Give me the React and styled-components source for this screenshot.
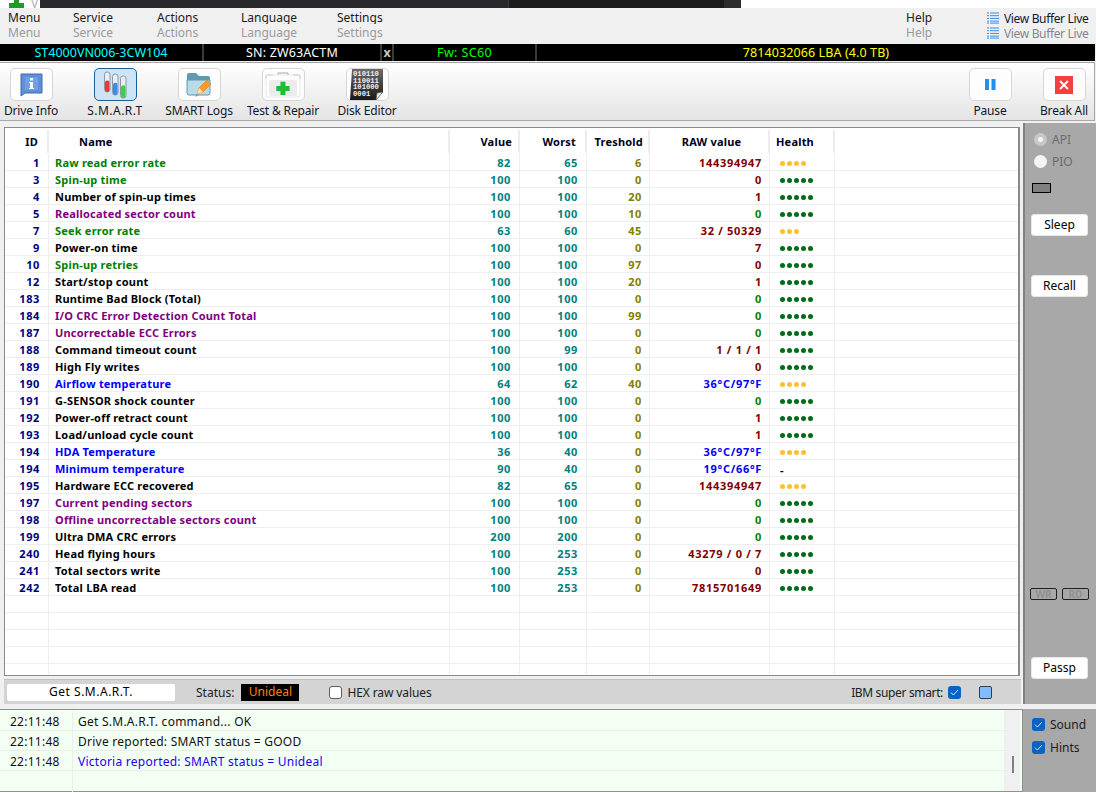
import React from 'react';
import styled, { createGlobalStyle } from 'styled-components';

const GlobalStyle = createGlobalStyle`
  html, body {
    margin: 0;
    padding: 0;
    width: 1096px;
    height: 792px;
    overflow: hidden;
    background: #f0f0f0;
  }
  * { box-sizing: border-box; }
`;

const FONT = `"Noto Sans", "Liberation Sans", sans-serif`;

const GREEN = '#008000';
const PURPLE = '#800080';
const BLUE = '#0000ff';
const BLACK = '#000000';
const MAROON = '#800000';

// id, name, name colour, value, worst, treshold, raw, raw colour, health dots colour, dots
const ROWS = [
  [1, 'Raw read error rate', GREEN, 82, 65, 6, '144394947', MAROON, 'warn', 4],
  [3, 'Spin-up time', GREEN, 100, 100, 0, '0', MAROON, 'good', 5],
  [4, 'Number of spin-up times', BLACK, 100, 100, 20, '1', MAROON, 'good', 5],
  [5, 'Reallocated sector count', PURPLE, 100, 100, 10, '0', GREEN, 'good', 5],
  [7, 'Seek error rate', GREEN, 63, 60, 45, '32 / 50329', MAROON, 'warn', 3],
  [9, 'Power-on time', BLACK, 100, 100, 0, '7', MAROON, 'good', 5],
  [10, 'Spin-up retries', GREEN, 100, 100, 97, '0', MAROON, 'good', 5],
  [12, 'Start/stop count', BLACK, 100, 100, 20, '1', MAROON, 'good', 5],
  [183, 'Runtime Bad Block (Total)', BLACK, 100, 100, 0, '0', GREEN, 'good', 5],
  [184, 'I/O CRC Error Detection Count Total', PURPLE, 100, 100, 99, '0', GREEN, 'good', 5],
  [187, 'Uncorrectable ECC Errors', PURPLE, 100, 100, 0, '0', GREEN, 'good', 5],
  [188, 'Command timeout count', BLACK, 100, 99, 0, '1 / 1 / 1', MAROON, 'good', 5],
  [189, 'High Fly writes', BLACK, 100, 100, 0, '0', MAROON, 'good', 5],
  [190, 'Airflow temperature', BLUE, 64, 62, 40, '36°C/97°F', BLUE, 'warn', 4],
  [191, 'G-SENSOR shock counter', BLACK, 100, 100, 0, '0', GREEN, 'good', 5],
  [192, 'Power-off retract count', BLACK, 100, 100, 0, '1', MAROON, 'good', 5],
  [193, 'Load/unload cycle count', BLACK, 100, 100, 0, '1', MAROON, 'good', 5],
  [194, 'HDA Temperature', BLUE, 36, 40, 0, '36°C/97°F', BLUE, 'warn', 4],
  [194, 'Minimum temperature', BLUE, 90, 40, 0, '19°C/66°F', BLUE, 'none', 0],
  [195, 'Hardware ECC recovered', BLACK, 82, 65, 0, '144394947', MAROON, 'warn', 4],
  [197, 'Current pending sectors', PURPLE, 100, 100, 0, '0', GREEN, 'good', 5],
  [198, 'Offline uncorrectable sectors count', PURPLE, 100, 100, 0, '0', GREEN, 'good', 5],
  [199, 'Ultra DMA CRC errors', BLACK, 200, 200, 0, '0', GREEN, 'good', 5],
  [240, 'Head flying hours', BLACK, 100, 253, 0, '43279 / 0 / 7', MAROON, 'good', 5],
  [241, 'Total sectors write', BLACK, 100, 253, 0, '0', MAROON, 'good', 5],
  [242, 'Total LBA read', BLACK, 100, 253, 0, '7815701649', MAROON, 'good', 5],
];

const Page = styled.div`
  width: 1096px;
  height: 792px;
  display: flex;
  flex-direction: column;
  overflow: hidden;
  background: #f0f0f0;
  font-family: ${FONT};
  font-size: 12px;
  color: #000;
`;

/* strip of the window behind, cut off at the top */
const BehindStrip = styled.div`
  height: 8px;
  display: flex;
  background: #fff;
  overflow: hidden;
`;
const BehindIcon = styled.div`
  width: 40px;
  display: flex;
  gap: 7px;
  padding-left: 9px;
`;
const BehindLetter = styled.span`
  font-size: 12px;
  line-height: 8px;
  color: #b0b0b0;
`;
const BehindPane = styled.div`
  width: ${(p) => p.$w}px;
  background: ${(p) => p.$bg};
  border-right: ${(p) => (p.$edge ? '1px solid #3c3c3c' : 'none')};
`;

const MenuBar = styled.div`
  height: 36px;
  display: flex;
  padding: 2px 0 0 8px;
`;
const MenuItem = styled.div`
  width: ${(p) => p.$w}px;
  margin-left: ${(p) => p.$ml || 0}px;
  display: flex;
  flex-direction: column;
`;
const MenuLabel = styled.span`
  height: 14px;
  margin-bottom: 1px;
  line-height: 15px;
  overflow: ${(p) => (p.$clip ? 'hidden' : 'visible')};
  white-space: nowrap;
  color: ${(p) => (p.$ghost ? '#9a9a9a' : '#1a1a1a')};
`;
const BufferLines = styled.div`
  width: 104px;
  padding-top: 1px;
  display: flex;
  flex-direction: column;
`;
const BufferLine = styled.div`
  height: 14px;
  margin-bottom: 1px;
  display: flex;
  align-items: center;
  gap: 5px;
  white-space: nowrap;
  letter-spacing: -0.35px;
  color: ${(p) => (p.$ghost ? '#808890' : '#101830')};
  svg { flex: none; }
`;

const DriveBar = styled.div`
  height: 17px;
  width: 1095px;
  display: grid;
  grid-template-columns: 202px 176px 10px 141px 1fr;
  column-gap: 2px;
  background: #3a3a3a;
  font-size: 12.5px;
  line-height: 17px;
`;
const DriveCell = styled.div`
  background: #000;
  text-align: center;
  color: ${(p) => p.$color};
  font-weight: ${(p) => (p.$bold ? 700 : 400)};
  letter-spacing: ${(p) => p.$track || 0}px;
  white-space: nowrap;
`;

const Toolbar = styled.div`
  height: 59px;
  width: 1095px;
  margin-top: 1px;
  display: flex;
  justify-content: space-between;
  border-top: 1px solid #a4a4a4;
  border-bottom: 1px solid #a8a8a8;
  border-right: 1px solid #a8a8a8;
  background: linear-gradient(#ffffff, #e4e4e4);
  padding-top: 5px;
`;
const ToolGroup = styled.div`
  display: flex;
  gap: ${(p) => p.$gap}px;
  margin: 0 ${(p) => p.$mr || 0}px 0 ${(p) => p.$ml || 0}px;
`;
const ToolItem = styled.div`
  width: 64px;
  display: flex;
  flex-direction: column;
  align-items: center;
`;
const ToolButton = styled.div`
  width: 43px;
  height: 33px;
  display: flex;
  align-items: center;
  justify-content: center;
  border-radius: 5px;
  border: 1px solid ${(p) => (p.$active ? '#1c5f94' : '#d6d6d6')};
  background: ${(p) => (p.$active ? '#cde4f7' : '#fdfdfd')};
`;
const ToolLabel = styled.span`
  margin-top: 2px;
  line-height: 15px;
  white-space: nowrap;
  letter-spacing: ${(p) => p.$track ?? -0.15}px;
  color: #101828;
`;

const Main = styled.div`
  height: 581px;
  margin-top: 2px;
  display: flex;
`;
const LeftColumn = styled.div`
  width: 1023px;
  padding: 4px 3px 0 4px;
  display: flex;
  flex-direction: column;
`;
const Table = styled.div`
  height: 549px;
  border: 1px solid #8a8a8a;
  border-right-width: 2px;
  background: #fff;
  overflow: hidden;
  display: flex;
  flex-direction: column;
  font-size: 11px;
  font-weight: 700;
  letter-spacing: 0.2px;
`;
const COLUMNS = '44px 401px 70px 67px 63px 120px 65px 1fr';
const HeadRow = styled.div`
  flex: none;
  height: 26px;
  padding-top: 2px;
  display: grid;
  grid-template-columns: ${COLUMNS};
`;
const HeadCell = styled.div`
  height: 23px;
  line-height: 23px;
  border-right: 2px solid #ececec;
  text-align: ${(p) => p.$align || 'right'};
  padding: ${(p) => p.$pad || '0'};
  color: #000020;
  &:last-child { border-right: none; }
`;
const Row = styled.div`
  flex: none;
  height: 17px;
  display: grid;
  grid-template-columns: ${COLUMNS};
  border-bottom: 1px solid #eeeeee;
`;
const Cell = styled.div`
  line-height: 18px;
  white-space: nowrap;
  border-right: 1px solid #eeeeee;
  text-align: ${(p) => p.$align || 'right'};
  padding: ${(p) => p.$pad || '0'};
  color: ${(p) => p.$color || '#000'};
  letter-spacing: ${(p) => p.$track ?? 0.2}px;
  &:last-child { border-right: none; }
`;
const HealthCell = styled.div`
  display: flex;
  align-items: center;
  gap: 2px;
  padding: 1px 0 0 10px;
  border-right: 1px solid #eeeeee;
  color: #000;
`;
const Dot = styled.span`
  width: 5px;
  height: 5px;
  border-radius: 50%;
  background: ${(p) => (p.$kind === 'warn' ? '#ffc030' : '#006c18')};
`;

const StatusBar = styled.div`
  height: 25px;
  margin-top: 3px;
  margin-right: -1px;
  display: flex;
  align-items: center;
  padding: 0 29px 0 3px;
  background: #d4d4d4;
  border-top: 1px solid #c0c0c0;
`;
const GetButton = styled.div`
  width: 168px;
  height: 17px;
  line-height: 16px;
  text-align: center;
  letter-spacing: 0.5px;
  background: #fff;
  border-radius: 2px;
`;
const StatusLabel = styled.span`
  margin-left: 21px;
  line-height: 15px;
  color: #202020;
`;
const StatusBadge = styled.div`
  width: 58px;
  height: 17px;
  margin-left: 7px;
  line-height: 16px;
  text-align: center;
  background: #000;
  color: #ff8000;
`;
const HexLabel = styled.label`
  margin-left: 30px;
  display: flex;
  align-items: center;
  gap: 5px;
  letter-spacing: -0.1px;
  color: #202020;
`;
const EmptyBox = styled.span`
  width: 13px;
  height: 13px;
  border-radius: 3px;
  border: 1px solid #5c5c5c;
  background: #fff;
`;
const IbmLabel = styled.span`
  margin-left: auto;
  letter-spacing: -0.35px;
  color: #202020;
`;
const CheckBox = styled.span`
  flex: none;
  width: 13px;
  height: 13px;
  border-radius: 3px;
  background: #0a62c2;
  display: flex;
  align-items: center;
  justify-content: center;
  margin-left: ${(p) => p.$ml || 0}px;
`;
const ColorSwatch = styled.span`
  width: 13px;
  height: 13px;
  margin-left: 18px;
  border-radius: 2px;
  border: 1px solid #30404c;
  background: #80bcff;
`;

const SidePanel = styled.div`
  width: 73px;
  display: flex;
  flex-direction: column;
  background: #a8a8a8;
  border-left: 2px solid #808080;
  padding: 5px 0 0 6px;
`;
const RadioRow = styled.div`
  height: 22px;
  padding-left: 3px;
  display: flex;
  align-items: center;
  gap: 5px;
  color: #6c6c6c;
`;
const Radio = styled.span`
  width: 13px;
  height: 13px;
  border-radius: 50%;
  background: ${(p) => (p.$on ? '#c8c8c8' : '#f4f4f4')};
  display: flex;
  align-items: center;
  justify-content: center;
  &::after {
    content: '';
    width: 5px;
    height: 5px;
    border-radius: 50%;
    background: ${(p) => (p.$on ? '#f4f4f4' : 'transparent')};
  }
`;
const Led = styled.div`
  width: 19px;
  height: 10px;
  margin: 11px 0 0 1px;
  background: #808080;
  border: 1px solid #000;
`;
const SideButton = styled.div`
  width: 57px;
  height: 22px;
  margin-top: ${(p) => p.$mt}px;
  line-height: 20px;
  text-align: center;
  background: #fff;
  border-radius: 3px;
  border: 1px solid #e8e8e8;
`;
const IoFlags = styled.div`
  margin: 291px 0 0 -1px;
  display: flex;
  gap: 5px;
`;
const IoFlag = styled.span`
  width: 27px;
  height: 12px;
  line-height: 11px;
  text-align: center;
  font-size: 10px;
  font-weight: 700;
  color: #909090;
  border: 1px solid #202020;
  border-radius: 2px;
`;

const Bottom = styled.div`
  height: 83px;
  margin-top: 5px;
  display: flex;
`;
const LogPanel = styled.div`
  width: 1023px;
  display: flex;
  background: #f3fff3;
  border: 1px solid #909090;
  border-left: none;
`;
const LogRows = styled.div`
  flex: 1;
  padding-top: 1px;
  display: flex;
  flex-direction: column;
  letter-spacing: 0.25px;
`;
const LogRow = styled.div`
  height: 20px;
  flex: none;
  display: grid;
  grid-template-columns: 73px 1fr;
  border-bottom: 1px solid #e8f0e8;
  line-height: 22px;
  &:last-child { border-bottom: none; height: 21px; }
`;
const LogTime = styled.div`
  padding-left: 10px;
  border-right: 1px solid #e8f0e8;
  color: #101010;
`;
const LogText = styled.div`
  padding-left: 5px;
  color: ${(p) => p.$color || '#101010'};
`;
const LogScroll = styled.div`
  position: relative;
  width: 16px;
  margin-right: 2px;
  background: #f0f0f0;
`;
const ScrollThumb = styled.div`
  position: absolute;
  left: 8px;
  top: 46px;
  width: 2px;
  height: 17px;
  background: #808080;
`;
const OptionPanel = styled.div`
  flex: 1;
  background: #a8a8a8;
  padding: 7px 0 0 9px;
  display: flex;
  flex-direction: column;
  gap: 6px;
`;
const OptionRow = styled.div`
  height: 17px;
  display: flex;
  align-items: center;
  gap: 5px;
  color: #1c1c1c;
`;

const Tick = () => (
  <svg width="9" height="7" viewBox="0 0 9 7">
    <path d="M1 3.6 L3.4 6 L8 1" fill="none" stroke="#d8e8f8" strokeWidth="1" />
  </svg>
);

const GreenPlus = () => (
  <svg width="15" height="8" viewBox="0 0 15 8">
    <rect x="5" y="0" width="5" height="8" fill="#18a020" />
    <rect x="0" y="3" width="15" height="5" fill="#18a020" />
  </svg>
);

const ListIcon = () => (
  <svg width="12" height="12" viewBox="0 0 12 12">
    {[0.5, 3.2, 5.9, 8.6, 10.6].map((y) => (
      <g key={y} fill="#2f8fe8">
        <rect x="0" y={y} width="2" height="1" />
        <rect x="3" y={y} width="9" height="1" />
      </g>
    ))}
  </svg>
);

const InfoIcon = () => (
  <svg width="24" height="24" viewBox="0 0 24 24">
    <path d="M2 1 H23 V20 H6 L2 23 Z" fill="#5f8fd6" stroke="#3f6cb0" />
    <rect x="6" y="4" width="13" height="13" fill="#6f9fe4" />
    <rect x="11" y="5" width="3" height="2.4" fill="#fff" />
    <path d="M10 9 H14 V15 H15 V16 H10 V15 H11 V10 H10 Z" fill="#fff" />
  </svg>
);

const Tube = ({ x, y, h, fill }) => (
  <g>
    <rect x={x} y={y} width="5.5" height={h} rx="2.5" fill="#e8eef2" stroke="#8c98a2" />
    <rect x={x + 0.5} y={y + h * 0.42} width="4.5" height={h * 0.58} rx="2.2" fill={fill} />
  </g>
);

const TubesIcon = () => (
  <svg width="24" height="28" viewBox="0 0 24 28">
    <Tube x={1.5} y={1} h={20} fill="#e23a3a" />
    <Tube x={9.5} y={3} h={21} fill="#3a8ee8" />
    <Tube x={17.5} y={5} h={22} fill="#3fce4a" />
  </svg>
);

const FolderIcon = () => (
  <svg width="26" height="26" viewBox="0 0 26 26">
    <path d="M1 3 Q1 1 3 1 H10 L13 4 H22 Q24 4 24 6 V22 H3 Q1 22 1 20 Z" fill="#5f9ab0" />
    <path d="M1 8 H24 V21 Q24 23 22 23 H3 Q1 23 1 21 Z" fill="#b9dbe8" stroke="#5f9ab0" />
    <path d="M11 22 L13 16 L21 8 L25 12 L17 20 Z" fill="#f79a30" stroke="#e67e18" strokeWidth="0.6" />
    <path d="M11 22 L13 16 L17 20 Z" fill="#fbe3c4" />
    <path d="M9 25 L11 22 L13 23 Z" fill="#909090" />
  </svg>
);

const KitIcon = () => (
  <svg width="36" height="26" viewBox="0 0 36 26">
    <path d="M13 3 V1 H23 V3" fill="none" stroke="#a8a8a8" />
    <path d="M1 7 V4 Q1 3 2 3 H8 M28 3 H34 Q35 3 35 4 V7" fill="none" stroke="#b4b4b4" />
    <rect x="1" y="3" width="34" height="22" rx="2" fill="none" stroke="#e8e8e8" />
    <rect x="4" y="8" width="28" height="16" rx="2" fill="#ececec" />
    <path d="M15 8 H21 V13 H26 V19 H21 V24 H15 V19 H10 V13 H15 Z" fill="#22bb33" transform="translate(3 3.2) scale(0.83)" />
  </svg>
);

const BinaryText = styled.text`
  font-family: "Liberation Mono", monospace;
  font-size: 7.2px;
  font-weight: 700;
  fill: #f0f0f0;
`;

const DiskIcon = () => (
  <svg width="38" height="33" viewBox="0 0 38 33">
    <defs>
      <linearGradient id="pageShade" x1="0" y1="0" x2="0" y2="1">
        <stop offset="0" stopColor="#6c6c6c" />
        <stop offset="1" stopColor="#181818" />
      </linearGradient>
    </defs>
    <path d="M4 1 H35 V24 L28 32 H2 Z" fill="url(#pageShade)" />
    <path d="M28 32 L29 25 L35 24 Z" fill="#e8e8e8" stroke="#505050" strokeWidth="0.6" />
    {['010110', '110011', '101000', '0001'].map((line, i) => (
      <BinaryText key={line} x="5" y={8 + i * 6.6}>{line}</BinaryText>
    ))}
  </svg>
);

const PauseIcon = () => (
  <svg width="11" height="11" viewBox="0 0 11 11">
    <rect x="0" y="0" width="4" height="11" fill="#1e90f0" />
    <rect x="6.5" y="0" width="4" height="11" fill="#1e90f0" />
  </svg>
);

const BreakIcon = () => (
  <svg width="18" height="18" viewBox="0 0 18 18">
    <rect width="18" height="18" fill="#f44040" />
    <path d="M5 5 L13 13 M13 5 L5 13" stroke="#fff" strokeWidth="1.8" />
  </svg>
);

const TOOLS = [
  ['Drive Info', <InfoIcon key="i" />],
  ['S.M.A.R.T', <TubesIcon key="s" />, true, 0.45],
  ['SMART Logs', <FolderIcon key="l" />],
  ['Test & Repair', <KitIcon key="t" />],
  ['Disk Editor', <DiskIcon key="d" />],
];

const Tool = ({ label, active, track, children }) => (
  <ToolItem>
    <ToolButton $active={active}>{children}</ToolButton>
    <ToolLabel $track={track}>{label}</ToolLabel>
  </ToolItem>
);

const App = () => {
  return (
    <Page>
      <GlobalStyle />
      <BehindStrip>
        <BehindIcon>
          <GreenPlus />
          <BehindLetter>V</BehindLetter>
        </BehindIcon>
        <BehindPane $w={469} $bg="#28282c" $edge />
        <BehindPane $w={215} $bg="#1c1c1c" />
        <BehindPane $w={17} $bg="#2c2c2c" />
      </BehindStrip>

      <MenuBar>
        {[['Menu', 65], ['Service', 84], ['Actions', 84], ['Language', 96], ['Settings', 60]].map(([name, w]) => (
          <MenuItem key={name} $w={w}>
            <MenuLabel $clip={name.includes('g')}>{name}</MenuLabel>
            <MenuLabel $ghost>{name}</MenuLabel>
          </MenuItem>
        ))}
        <MenuItem $w={81} $ml={509}>
          <MenuLabel>Help</MenuLabel>
          <MenuLabel $ghost>Help</MenuLabel>
        </MenuItem>
        <BufferLines>
          <BufferLine><ListIcon />View Buffer Live</BufferLine>
          <BufferLine $ghost><ListIcon />View Buffer Live</BufferLine>
        </BufferLines>
      </MenuBar>

      <DriveBar>
        <DriveCell $color="#00ffff">ST4000VN006-3CW104</DriveCell>
        <DriveCell $color="#ffffff" $track={0.15}>SN: ZW63ACTM</DriveCell>
        <DriveCell $color="#c8c8c8" $bold>x</DriveCell>
        <DriveCell $color="#00ff00" $track={0.35}>Fw: SC60</DriveCell>
        <DriveCell $color="#ffff00" $track={0.1}>7814032066 LBA (4.0 TB)</DriveCell>
      </DriveBar>

      <Toolbar>
        <ToolGroup $gap={20} $ml={-1}>
          {TOOLS.map(([label, icon, active, track]) => (
            <Tool key={label} label={label} active={active} track={track}>{icon}</Tool>
          ))}
        </ToolGroup>
        <ToolGroup $gap={10} $mr={-2}>
          <Tool label="Pause"><PauseIcon /></Tool>
          <Tool label="Break All"><BreakIcon /></Tool>
        </ToolGroup>
      </Toolbar>

      <Main>
        <LeftColumn>
          <Table>
            <HeadRow>
              <HeadCell $pad="0 9px 0 0">ID</HeadCell>
              <HeadCell $align="left" $pad="0 0 0 30px">Name</HeadCell>
              <HeadCell $pad="0 6px 0 0">Value</HeadCell>
              <HeadCell $pad="0 9px 0 0">Worst</HeadCell>
              <HeadCell $pad="0 5px 0 0">Treshold</HeadCell>
              <HeadCell $align="center" $pad="0 0 0 5px">RAW value</HeadCell>
              <HeadCell $align="left" $pad="0 0 0 6px">Health</HeadCell>
              <HeadCell />
            </HeadRow>
            {ROWS.map(([id, name, color, value, worst, tres, raw, rawColor, kind, dots]) => (
              <Row key={name}>
                <Cell $color="#000080" $pad="0 8px 0 0" $track={0.6}>{id}</Cell>
                <Cell $align="left" $color={color} $pad="0 0 0 6px">{name}</Cell>
                <Cell $color="#008080" $pad="0 8px 0 0" $track={0.6}>{value}</Cell>
                <Cell $color="#008080" $pad="0 8px 0 0" $track={0.6}>{worst}</Cell>
                <Cell $color="#808000" $pad="0 7px 0 0" $track={0.6}>{tres}</Cell>
                <Cell $color={rawColor} $pad="0 7px 0 0" $track={0.7}>{raw}</Cell>
                <HealthCell>
                  {dots === 0 ? '-' : Array.from({ length: dots }, (_, i) => <Dot key={i} $kind={kind} />)}
                </HealthCell>
                <Cell />
              </Row>
            ))}
            {[0, 1, 2, 3, 4].map((i) => (
              <Row key={i}>
                <Cell /><Cell /><Cell /><Cell /><Cell /><Cell /><Cell /><Cell />
              </Row>
            ))}
          </Table>
          <StatusBar>
            <GetButton>Get S.M.A.R.T.</GetButton>
            <StatusLabel>Status:</StatusLabel>
            <StatusBadge>Unideal</StatusBadge>
            <HexLabel><EmptyBox />HEX raw values</HexLabel>
            <IbmLabel>IBM super smart:</IbmLabel>
            <CheckBox $ml={5}><Tick /></CheckBox>
            <ColorSwatch />
          </StatusBar>
        </LeftColumn>
        <SidePanel>
          <RadioRow><Radio $on />API</RadioRow>
          <RadioRow><Radio />PIO</RadioRow>
          <Led />
          <SideButton $mt={21}>Sleep</SideButton>
          <SideButton $mt={39}>Recall</SideButton>
          <IoFlags>
            <IoFlag>WR</IoFlag>
            <IoFlag>RD</IoFlag>
          </IoFlags>
          <SideButton $mt={57}>Passp</SideButton>
        </SidePanel>
      </Main>

      <Bottom>
        <LogPanel>
          <LogRows>
            <LogRow><LogTime>22:11:48</LogTime><LogText>Get S.M.A.R.T. command... OK</LogText></LogRow>
            <LogRow><LogTime>22:11:48</LogTime><LogText>Drive reported: SMART status = GOOD</LogText></LogRow>
            <LogRow><LogTime>22:11:48</LogTime><LogText $color="#1a00f0">Victoria reported: SMART status = Unideal</LogText></LogRow>
            <LogRow><LogTime /><LogText /></LogRow>
          </LogRows>
          <LogScroll><ScrollThumb /></LogScroll>
        </LogPanel>
        <OptionPanel>
          <OptionRow><CheckBox><Tick /></CheckBox>Sound</OptionRow>
          <OptionRow><CheckBox><Tick /></CheckBox>Hints</OptionRow>
        </OptionPanel>
      </Bottom>
    </Page>
  );
};

export default App;
